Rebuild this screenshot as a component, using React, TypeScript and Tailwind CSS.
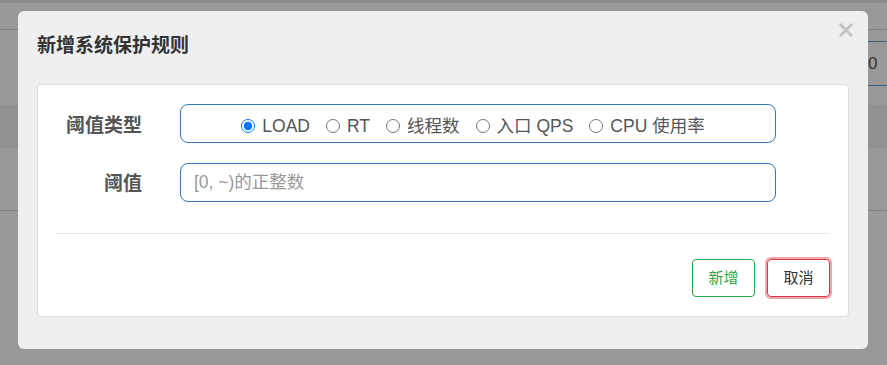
import React from "react";

const font = { fontFamily: '"Liberation Sans", "Noto Sans CJK SC", sans-serif' };

function Radio({ label, checked }: { label: string; checked?: boolean }) {
  return (
    <label className="flex items-center">
      <input type="radio" name="grade" defaultChecked={checked} className="m-0 mr-[7px] h-[14px] w-[14px]" />
      <span>{label}</span>
    </label>
  );
}

export default function App() {
  return (
    <div className="relative h-[365px] w-full overflow-hidden bg-[#999999]" style={font}>
      {/* background page under overlay */}
      <div className="h-[3px] bg-[#8a8a8a]" />
      <div className="h-[26px]" />
      <div className="h-px bg-[#808080]" />
      <div className="flex h-[75px] justify-end">
        <div className="mt-[11px] flex h-[45px] w-[19px] items-center border-y border-[#3b5d80] text-[17px] text-[#333]">0</div>
      </div>
      <div className="h-[43px] bg-[#909192]" />
      <div className="h-[62px]" />
      <div className="h-px bg-[#808080]" />

      {/* modal */}
      <div className="absolute left-[18px] top-[11px] h-[338px] w-[850px] rounded-[6px] bg-[#efefef]">
        <div className="relative flex h-[73px] items-center pl-[19px] pb-[2px]">
          <h4 className="text-[19px] font-bold text-[#333]">新增系统保护规则</h4>
          <svg className="absolute left-[821px] top-[12px]" width="14" height="14" viewBox="0 0 14 14">
            <path d="M1 1 L13 13 M13 1 L1 13" stroke="#c4c4c4" strokeWidth="3" />
          </svg>
        </div>
        <div className="mx-[19px] h-[233px] rounded-[4px] border border-[#dddddd] bg-white">
          <div className="flex flex-col gap-[20px] pt-[19px]">
            <div className="flex items-center">
              <div className="w-[104px] pt-[5px] text-right text-[19px] font-bold text-[#555]">阈值类型</div>
              <div className="ml-[38px] flex h-[39px] w-[596px] items-center justify-center gap-[16px] rounded-[8px] border border-[#337ab7] pr-[10px] pt-[5px] text-[17.5px] text-[#555]">
                <Radio label="LOAD" checked />
                <Radio label="RT" />
                <Radio label="线程数" />
                <Radio label="入口 QPS" />
                <Radio label="CPU 使用率" />
              </div>
            </div>
            <div className="flex items-center">
              <div className="w-[104px] pt-[3px] text-right text-[19px] font-bold text-[#555]">阈值</div>
              <input
                placeholder="[0, ~)的正整数"
                className="ml-[38px] h-[39px] w-[596px] rounded-[8px] border border-[#337ab7] px-[13px] text-[17.5px] text-[#555] outline-none placeholder:text-[#999]"
              />
            </div>
          </div>
          <div className="mx-[19px] mt-[31px] h-px bg-[#e5e5e5]" />
          <div className="mr-[18px] mt-[25px] flex justify-end gap-[12px]">
            <button className="h-[38px] w-[63px] rounded-[4px] border border-[#28a745] text-[15px] text-[#28a745]">新增</button>
            <button className="h-[38px] w-[63px] rounded-[4px] border border-[#dc3545] text-[15px] text-[#333] shadow-[0_0_0_2px_rgba(220,53,69,0.45)]">取消</button>
          </div>
        </div>
      </div>
    </div>
  );
}
